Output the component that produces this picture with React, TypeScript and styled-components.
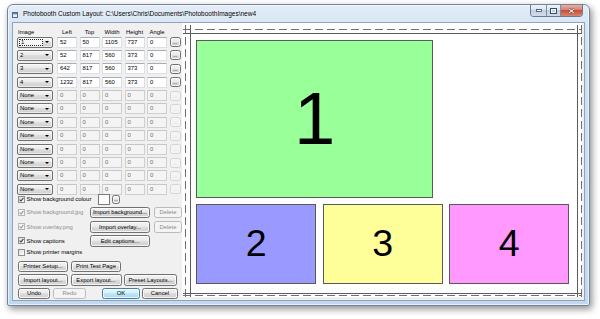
import React from "react";
import styled, { createGlobalStyle, css } from "styled-components";

const GlobalStyle = createGlobalStyle`
  html, body { margin: 0; padding: 0; background: #ffffff; }
  body {
    width: 600px;
    height: 319px;
    overflow: hidden;
    font-family: "Liberation Sans", Arial, sans-serif;
  }
  * { box-sizing: border-box; }
`;

const UI = "5.9px";

/* ---------- data ---------- */
type Photo = {
  n: number;
  left: number;
  top: number;
  width: number;
  height: number;
  angle: number;
  color: string;
};

const photos: Photo[] = [
  { n: 1, left: 52, top: 50, width: 1105, height: 737, angle: 0, color: "#99ff99" },
  { n: 2, left: 52, top: 817, width: 560, height: 373, angle: 0, color: "#9999ff" },
  { n: 3, left: 642, top: 817, width: 560, height: 373, angle: 0, color: "#ffff99" },
  { n: 4, left: 1232, top: 817, width: 560, height: 373, angle: 0, color: "#ff99ff" },
];
const EMPTY_ROWS = 8;
const SCALE = 0.2145;
const PAGE = { w: 1844, h: 1240 };
const ORIGIN = { x: 3, y: 6 };

/* ---------- window chrome ---------- */
const Window = styled.div`
  margin: 4px 0 0 7px;
  width: 583px;
  height: 302px;
  border: 1px solid #70869f;
  border-radius: 6px 6px 2px 2px;
  background: linear-gradient(180deg, #e3ecf6 0%, #d3e2f2 10%, #c4d8ed 100%);
  box-shadow: 2px 3px 7px rgba(0, 0, 0, 0.45), inset 0 0 0 1px rgba(255, 255, 255, 0.6);
  padding: 0 4px 4px 4px;
  display: flex;
  flex-direction: column;
`;

const TitleBar = styled.div`
  height: 17px;
  display: flex;
  align-items: flex-start;
`;

const TitleIcon = styled.svg`
  flex: none;
  margin-top: 7px;
  width: 6px;
  height: 6px;
`;

const TitleText = styled.div`
  flex: 1;
  margin: 4.5px 0 0 5px;
  font-size: 6.5px;
  line-height: 8px;
  color: #000;
  white-space: nowrap;
  text-shadow: 0 0 3px rgba(255, 255, 255, 0.9);
`;

const CaptionGroup = styled.div`
  display: flex;
  height: 12px;
  margin-right: 2px;
  border: 1px solid #6a7c95;
  border-top: none;
  border-radius: 0 0 4px 4px;
  overflow: hidden;
`;

const CaptionButton = styled.div<{ $kind: "min" | "max" | "close" }>`
  display: flex;
  align-items: center;
  justify-content: center;
  width: ${(p) => (p.$kind === "close" ? 22 : p.$kind === "min" ? 15 : 14)}px;
  background: ${(p) =>
    p.$kind === "close"
      ? "linear-gradient(180deg, #eab0a3 0%, #da7f6c 45%, #c7503a 50%, #d7836f 100%)"
      : "linear-gradient(180deg, #eef3f9 0%, #d9e4f1 45%, #c0d0e4 50%, #cedbeb 100%)"};
  & + & {
    border-left: 1px solid #7d8ea8;
  }
`;

const Client = styled.div`
  flex: 1;
  display: flex;
  background: #f0f0f0;
  border: 1px solid #8ea3bc;
`;

/* ---------- left panel ---------- */
const LeftPanel = styled.div`
  width: 169px;
  padding: 5px 0 0 4px;
  display: flex;
  flex-direction: column;
  font-size: ${UI};
  color: #000;
`;

const columns = css`
  display: grid;
  grid-template-columns: 37.5px repeat(5, 20px) 11px;
  column-gap: 2.5px;
`;

const HeaderRow = styled.div`
  ${columns};
  height: 8.5px;
  align-items: center;
`;

const HeaderLabel = styled.div<{ $left?: boolean }>`
  text-align: ${(p) => (p.$left ? "left" : "center")};
  padding-left: ${(p) => (p.$left ? "1px" : "0")};
  line-height: 8px;
  white-space: nowrap;
`;

const RowsGrid = styled.div`
  ${columns};
  grid-auto-rows: 11px;
  row-gap: 2.4px;
  align-items: center;
`;

const Combo = styled.div`
  position: relative;
  width: 36px;
  height: 11px;
  border: 1px solid #707070;
  border-radius: 2px;
  background: linear-gradient(180deg, #f4f4f4 0%, #ebebeb 45%, #dddddd 50%, #cfcfcf 100%);
  box-shadow: inset 0 0 0 1px rgba(255, 255, 255, 0.6);
  display: flex;
  align-items: center;
  padding: 0 0 0 1px;
`;

const ComboText = styled.div<{ $focused?: boolean }>`
  width: 24px;
  height: 7px;
  line-height: 7px;
  padding-left: 1px;
  ${(p) =>
    p.$focused &&
    css`
      outline: 1px dotted #222;
      outline-offset: -1px;
      background: #f7f7f7;
      padding-left: 2px;
    `}
`;

const ComboArrow = styled.div`
  margin-left: auto;
  margin-right: 3px;
  width: 0;
  height: 0;
  border-left: 2px solid transparent;
  border-right: 2px solid transparent;
  border-top: 2.5px solid #000;
`;

const Field = styled.div<{ $disabled?: boolean }>`
  height: 11px;
  line-height: 9px;
  padding-left: 2px;
  white-space: nowrap;
  border: 1px solid ${(p) => (p.$disabled ? "#cfcfcf" : "#dbdfe6")};
  border-top-color: ${(p) => (p.$disabled ? "#c6c6c6" : "#abadb3")};
  background: ${(p) => (p.$disabled ? "#f4f4f4" : "#ffffff")};
  color: ${(p) => (p.$disabled ? "#6d6d6d" : "#000")};
`;

const buttonBase = css<{ $disabled?: boolean; $default?: boolean }>`
  display: flex;
  align-items: center;
  justify-content: center;
  white-space: nowrap;
  border-radius: 2.5px;
  border: 1px solid #707070;
  background: linear-gradient(180deg, #f2f2f2 0%, #ebebeb 45%, #dddddd 50%, #cfcfcf 100%);
  box-shadow: inset 0 0 0 1px rgba(255, 255, 255, 0.75);
  color: #000;
  ${(p) =>
    p.$default &&
    css`
      border-color: #3c7fb1;
      background: linear-gradient(180deg, #eaf6fd 0%, #d9f0fc 45%, #bee6fd 50%, #a7d9f5 100%);
    `}
  ${(p) =>
    p.$disabled &&
    css`
      border-color: #b8bcbf;
      background: #f4f4f4;
      box-shadow: none;
      color: #8a8a8a;
    `}
`;

const DotsButton = styled.div<{ $disabled?: boolean }>`
  ${buttonBase};
  width: 11px;
  height: 10px;
  align-items: flex-end;
  line-height: 7px;
  font-size: 5px;
  ${(p) =>
    p.$disabled &&
    css`
      border-color: #d2d4d6;
      color: #b5b5b5;
    `}
`;

const Lower = styled.div`
  display: flex;
  flex-direction: column;
  gap: 2.5px;
`;

const Row = styled.div<{ $h: number; $gap?: number; $top?: number }>`
  display: flex;
  align-items: center;
  height: ${(p) => p.$h}px;
  gap: ${(p) => p.$gap ?? 4}px;
  margin-top: ${(p) => p.$top ?? 0}px;
  padding-left: 1px;
`;

const CheckArea = styled.div<{ $w: number; $disabled?: boolean }>`
  display: flex;
  align-items: center;
  gap: 1.5px;
  width: ${(p) => p.$w}px;
  white-space: nowrap;
  color: ${(p) => (p.$disabled ? "#8d8d8d" : "#000")};
`;

const CheckBoxBox = styled.div<{ $disabled?: boolean }>`
  flex: none;
  width: 7px;
  height: 7px;
  border: 1px solid ${(p) => (p.$disabled ? "#b7b7b7" : "#8e8f8f")};
  background: ${(p) =>
    p.$disabled ? "#f4f4f4" : "linear-gradient(135deg, #dcdcdc 0%, #ffffff 100%)"};
  display: flex;
  align-items: center;
  justify-content: center;
`;

const Button = styled.div<{ $w: number; $disabled?: boolean; $default?: boolean; $ml?: number }>`
  ${buttonBase};
  width: ${(p) => p.$w}px;
  height: 11.5px;
  margin-left: ${(p) => p.$ml ?? 0}px;
`;

const Swatch = styled.div`
  width: 12px;
  height: 11px;
  border: 1px solid #7a7a7a;
  background: #ffffff;
`;

const SmallDots = styled.div`
  ${buttonBase};
  width: 8px;
  height: 9px;
  align-items: flex-end;
  line-height: 6px;
  font-size: 4.5px;
  margin-left: -2px;
`;

/* ---------- preview ---------- */
const Preview = styled.div`
  position: relative;
  width: 400px;
  height: 274px;
  margin: 0 2px 3px 0;
  background: #ffffff;
`;

const Guides = styled.svg`
  position: absolute;
  left: 0;
  top: 0;
`;

const PhotoBox = styled.div<{ $color: string }>`
  position: absolute;
  border: 1px solid #5a5a5a;
  background: ${(p) => p.$color};
  display: flex;
  align-items: center;
  justify-content: center;
  font-family: "Liberation Sans", Arial, sans-serif;
  line-height: 1;
  color: #000;
`;

/* ---------- small pieces ---------- */
function CheckBox({ checked, disabled }: { checked: boolean; disabled?: boolean }) {
  return (
    <CheckBoxBox $disabled={disabled}>
      {checked && (
        <svg width="5" height="5" viewBox="0 0 5 5">
          <path
            d="M0.6 2.6 L2 4 L4.4 0.8"
            fill="none"
            stroke={disabled ? "#9a9a9a" : "#2a3f63"}
            strokeWidth="1.1"
          />
        </svg>
      )}
    </CheckBoxBox>
  );
}

function CheckLabel(props: { w: number; label: string; checked: boolean; disabled?: boolean }) {
  return (
    <CheckArea $w={props.w} $disabled={props.disabled}>
      <CheckBox checked={props.checked} disabled={props.disabled} />
      <span>{props.label}</span>
    </CheckArea>
  );
}

const px = (v: number) => v * SCALE;

export default function App() {
  const pageRight = ORIGIN.x + px(PAGE.w);
  const pageBottom = ORIGIN.y + px(PAGE.h);
  const margin = { l: 5, t: 4, r: 4, b: 2 };

  return (
    <>
      <GlobalStyle />
      <Window>
        <TitleBar>
          <TitleIcon viewBox="0 0 6 6">
            <rect x="0.5" y="0.5" width="5" height="5" fill="#e4ecf5" stroke="#566b86" strokeWidth="1" />
            <rect x="1" y="1" width="4" height="1.3" fill="#5d84b8" />
          </TitleIcon>
          <TitleText>{"Photobooth Custom Layout: C:\\Users\\Chris\\Documents\\PhotoboothImages\\new4"}</TitleText>
          <CaptionGroup>
            <CaptionButton $kind="min">
              <svg width="6" height="3" viewBox="0 0 6 3">
                <rect x="0.5" y="0.5" width="5" height="2" fill="#ffffff" stroke="#3d4c62" strokeWidth="0.8" />
              </svg>
            </CaptionButton>
            <CaptionButton $kind="max">
              <svg width="7" height="6" viewBox="0 0 7 6">
                <rect x="0.5" y="0.5" width="6" height="5" fill="none" stroke="#3d4c62" strokeWidth="1" />
                <rect x="1.5" y="1.5" width="4" height="3" fill="none" stroke="#ffffff" strokeWidth="0.8" />
              </svg>
            </CaptionButton>
            <CaptionButton $kind="close">
              <svg width="7" height="6" viewBox="0 0 7 6">
                <path d="M1 0.8 L6 5.2 M6 0.8 L1 5.2" stroke="#6b2a1e" strokeWidth="2" />
                <path d="M1 0.8 L6 5.2 M6 0.8 L1 5.2" stroke="#ffffff" strokeWidth="1.1" />
              </svg>
            </CaptionButton>
          </CaptionGroup>
        </TitleBar>

        <Client>
          <LeftPanel>
            <HeaderRow>
              <HeaderLabel $left>Image</HeaderLabel>
              <HeaderLabel>Left</HeaderLabel>
              <HeaderLabel>Top</HeaderLabel>
              <HeaderLabel>Width</HeaderLabel>
              <HeaderLabel>Height</HeaderLabel>
              <HeaderLabel>Angle</HeaderLabel>
              <span />
            </HeaderRow>

            <RowsGrid>
              {photos.map((p, i) => (
                <React.Fragment key={p.n}>
                  <Combo>
                    <ComboText $focused={i === 0}>{p.n}</ComboText>
                    <ComboArrow />
                  </Combo>
                  <Field>{p.left}</Field>
                  <Field>{p.top}</Field>
                  <Field>{p.width}</Field>
                  <Field>{p.height}</Field>
                  <Field>{p.angle}</Field>
                  <DotsButton>...</DotsButton>
                </React.Fragment>
              ))}
              {Array.from({ length: EMPTY_ROWS }).map((_, i) => (
                <React.Fragment key={"e" + i}>
                  <Combo>
                    <ComboText>None</ComboText>
                    <ComboArrow />
                  </Combo>
                  <Field $disabled>0</Field>
                  <Field $disabled>0</Field>
                  <Field $disabled>0</Field>
                  <Field $disabled>0</Field>
                  <Field $disabled>0</Field>
                  <DotsButton $disabled>...</DotsButton>
                </React.Fragment>
              ))}
            </RowsGrid>

            <Lower>
              <Row $h={9}>
                <CheckLabel w={76} label="Show background colour" checked />
                <Swatch />
                <SmallDots>...</SmallDots>
              </Row>
              <Row $h={12}>
                <CheckLabel w={68} label="Show background.jpg" checked disabled />
                <Button $w={60}>Import background...</Button>
                <Button $w={28} $disabled>
                  Delete
                </Button>
              </Row>
              <Row $h={12}>
                <CheckLabel w={68} label="Show overlay.png" checked disabled />
                <Button $w={60}>Import overlay...</Button>
                <Button $w={28} $disabled>
                  Delete
                </Button>
              </Row>
              <Row $h={11}>
                <CheckLabel w={68} label="Show captions" checked />
                <Button $w={60}>Edit captions...</Button>
              </Row>
              <Row $h={7}>
                <CheckLabel w={90} label="Show printer margins" checked={false} />
              </Row>
              <Row $h={11} $gap={3} $top={2.5}>
                <Button $w={50}>Printer Setup...</Button>
                <Button $w={50}>Print Test Page</Button>
              </Row>
              <Row $h={11} $gap={2.5}>
                <Button $w={50}>Import layout...</Button>
                <Button $w={51}>Export layout...</Button>
                <Button $w={53}>Preset Layouts...</Button>
              </Row>
              <Row $h={11} $gap={3}>
                <Button $w={32}>Undo</Button>
                <Button $w={33} $disabled>
                  Redo
                </Button>
                <Button $w={38} $default $ml={13}>
                  OK
                </Button>
                <Button $w={36} $ml={-1}>
                  Cancel
                </Button>
              </Row>
            </Lower>
          </LeftPanel>

          <Preview>
            <Guides width={400} height={274}>
              {/* page edge (dashed) */}
              <g stroke="#707070" strokeWidth="1" strokeDasharray="8 4" fill="none">
                <line x1={1} x2={400} y1={ORIGIN.y + 0.5} y2={ORIGIN.y + 0.5} />
                <line x1={1} x2={400} y1={Math.round(pageBottom) + 0.5} y2={Math.round(pageBottom) + 0.5} />
                <line x1={ORIGIN.x + 0.5} x2={ORIGIN.x + 0.5} y1={2} y2={274} />
                <line x1={Math.round(pageRight) + 0.5} x2={Math.round(pageRight) + 0.5} y1={2} y2={274} />
              </g>
              {/* printable area (solid) */}
              <g stroke="#5c5c5c" strokeWidth="1" fill="none">
                <line x1={1} x2={400} y1={ORIGIN.y + margin.t + 0.5} y2={ORIGIN.y + margin.t + 0.5} />
                <line
                  x1={1}
                  x2={400}
                  y1={Math.round(pageBottom) - margin.b + 0.5}
                  y2={Math.round(pageBottom) - margin.b + 0.5}
                />
                <line x1={ORIGIN.x + margin.l + 0.5} x2={ORIGIN.x + margin.l + 0.5} y1={2} y2={274} />
                <line
                  x1={Math.round(pageRight) - margin.r + 0.5}
                  x2={Math.round(pageRight) - margin.r + 0.5}
                  y1={2}
                  y2={274}
                />
              </g>
            </Guides>
            {photos.map((p) => {
              const h = px(p.height);
              return (
                <PhotoBox
                  key={p.n}
                  $color={p.color}
                  style={{
                    left: ORIGIN.x + px(p.left),
                    top: ORIGIN.y + px(p.top),
                    width: px(p.width),
                    height: h,
                    fontSize: h * 0.47,
                  }}
                >
                  {p.n}
                </PhotoBox>
              );
            })}
          </Preview>
        </Client>
      </Window>
    </>
  );
}
